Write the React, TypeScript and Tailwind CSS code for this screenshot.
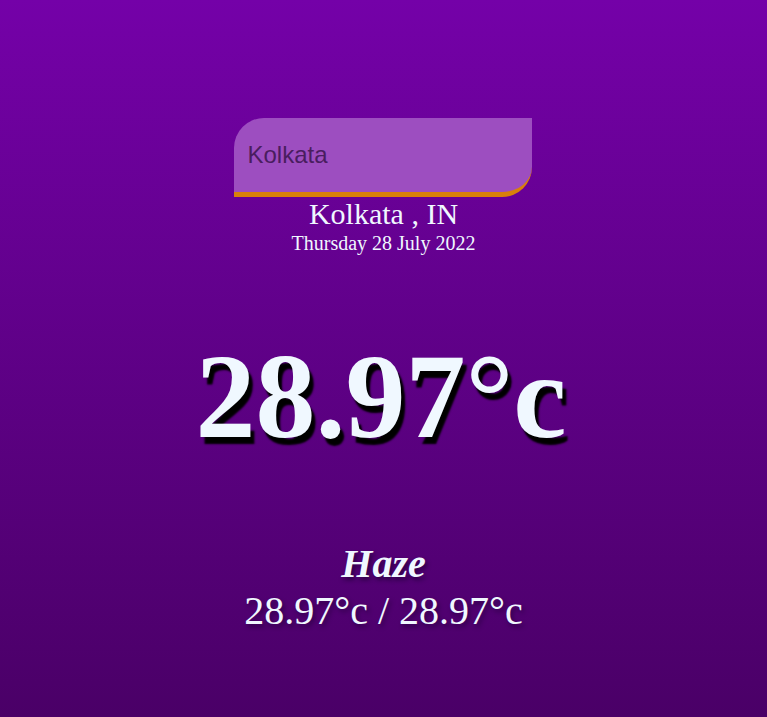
import { useState } from 'react';

export default function App() {
  const [city, setCity] = useState('Kolkata');

  return (
    <div className="min-h-screen w-full bg-gradient-to-b from-[#7401a8] to-[#4a0067] font-['Liberation_Serif',serif] text-[#f0f8ff]">
      <div className="flex flex-col items-center pt-[118px]">
        <input
          value={city}
          onChange={(e) => setCity(e.target.value)}
          className="-ml-[2px] h-[79px] w-[298px] rounded-tl-[30px] rounded-br-[30px] border-b-[5px] border-[#d9800a] bg-[#9d4ec0] pl-[14px] font-['Liberation_Sans',sans-serif] text-[24px] text-[#4a1d5f] outline-none"
        />
        <p className="text-[30px] leading-[34px]">Kolkata , IN</p>
        <p className="text-[20px] leading-[24px]">Thursday 28 July 2022</p>

        <h1 className="mt-[82px] pr-[5px] text-[120px] font-bold leading-[120px] [text-shadow:4px_7px_2px_#000]">
          28.97°c
        </h1>

        <p className="mt-[85px] text-[40px] font-bold italic leading-[44px] [text-shadow:2px_3px_4px_rgba(20,0,40,0.6)]">
          Haze
        </p>
        <p className="mt-[3px] text-[40px] leading-[44px] [text-shadow:2px_3px_4px_rgba(20,0,40,0.5)]">
          28.97°c / 28.97°c
        </p>
      </div>
    </div>
  );
}
